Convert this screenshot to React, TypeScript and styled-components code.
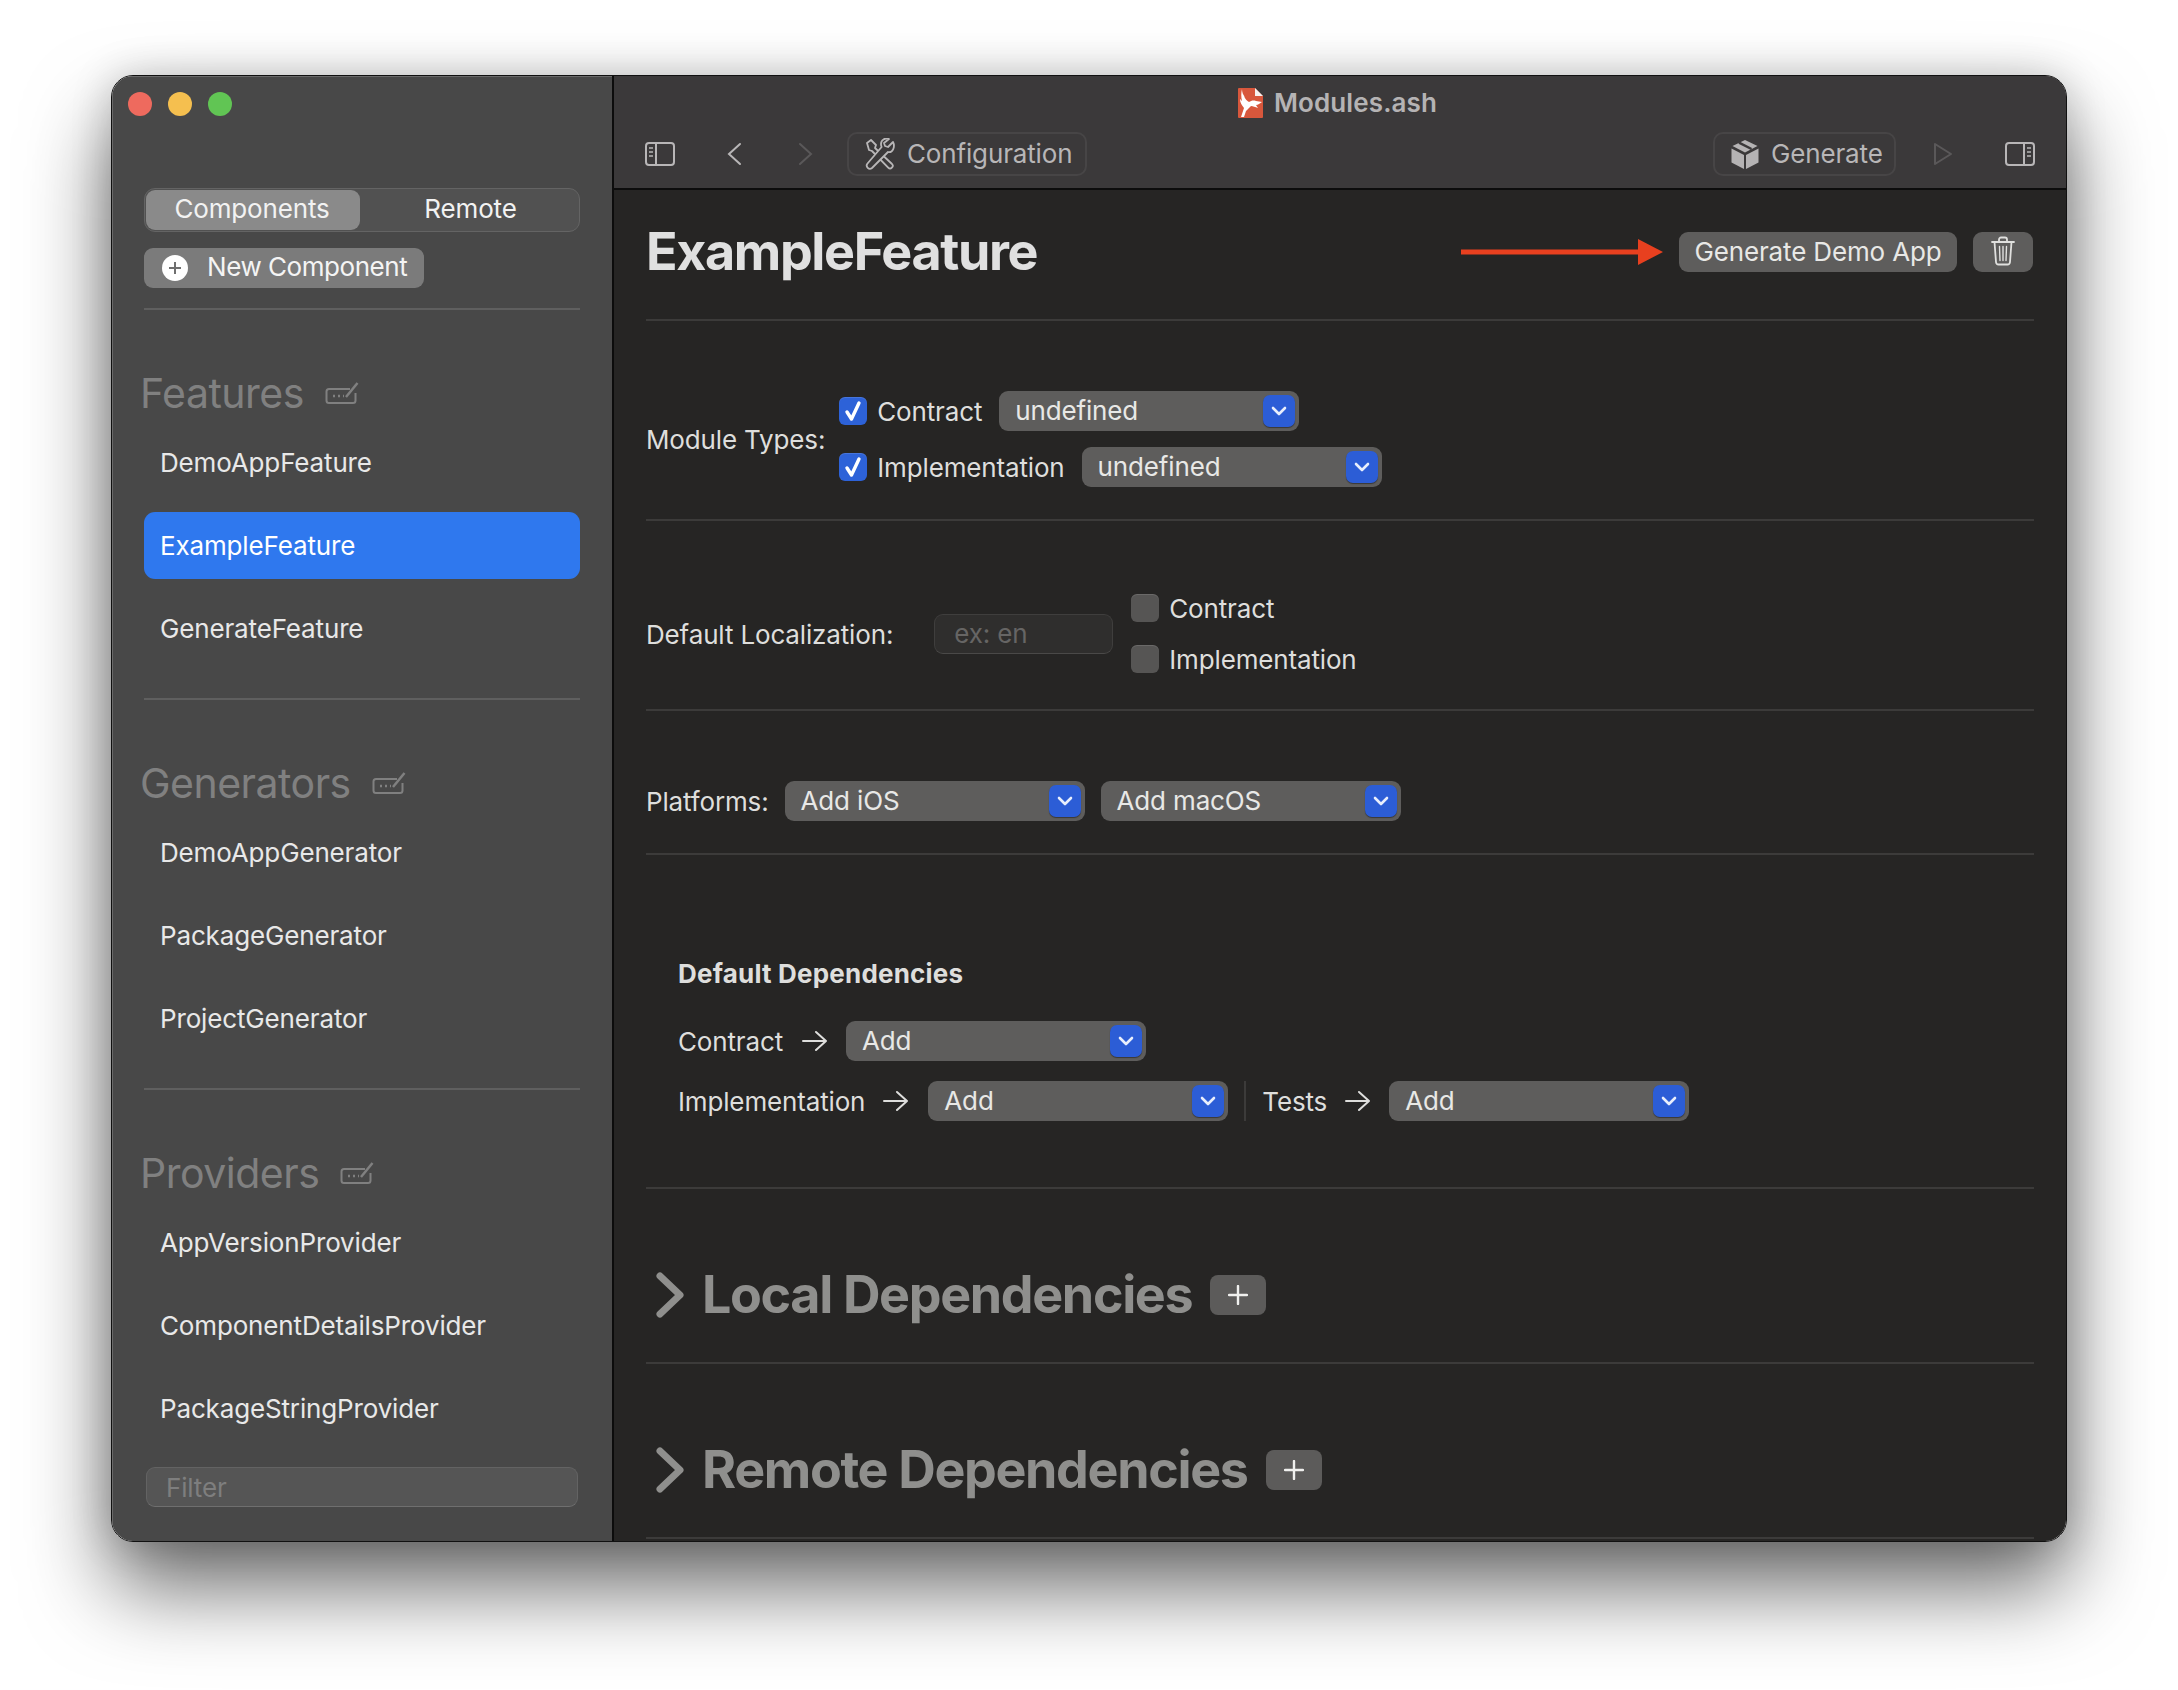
import styled, { createGlobalStyle } from 'styled-components';

const GlobalStyle = createGlobalStyle`
    html, body {
        margin: 0;
        padding: 0;
        background: #fff;
    }
    * {
        box-sizing: border-box;
    }
`;

const Page = styled.div`
    width: 2178px;
    height: 1690px;
    padding: 75px 0 0 111px;
    background: #fff;
    overflow: hidden;
    font-family: Inter, 'Liberation Sans', sans-serif;
    font-size: 26px;
    letter-spacing: -0.15px;
`;

const Window = styled.div`
    width: 1956px;
    height: 1467px;
    display: flex;
    border: 1px solid #111;
    border-radius: 22px;
    overflow: hidden;
    box-shadow: 0 46px 84px rgba(0, 0, 0, 0.58), 0 0 40px rgba(0, 0, 0, 0.18);
`;

// Sidebar

const Sidebar = styled.aside`
    width: 502px;
    flex-shrink: 0;
    display: flex;
    flex-direction: column;
    background: #484848;
    border-right: 2px solid #0c0c0c;
    box-shadow: inset 1px 1px 0 #6a6a6a;
`;

const TrafficLights = styled.div`
    display: flex;
    gap: 16px;
    margin: 16px 0 0 16px;
`;

const Light = styled.span<{ $color: string }>`
    width: 24px;
    height: 24px;
    border-radius: 50%;
    background: ${({ $color }) => $color};
`;

const SidebarBody = styled.div`
    padding: 72px 32px 0;
    display: flex;
    flex-direction: column;
`;

const Segmented = styled.div`
    height: 44px;
    padding: 1px;
    display: flex;
    background: #515151;
    border: 1px solid #646464;
    border-radius: 11px;
`;

const Segment = styled.div<{ $active?: boolean }>`
    width: ${({ $active }) => ($active ? '214px' : 'auto')};
    flex: ${({ $active }) => ($active ? 'none' : '1')};
    padding: 0 ${({ $active }) => ($active ? '2px' : '0')} 4px ${({ $active }) => ($active ? '0' : '3px')};
    display: flex;
    align-items: center;
    justify-content: center;
    border-radius: 9px;
    color: #f2f2f2;
    background: ${({ $active }) => ($active ? '#8a8a8a' : 'transparent')};
`;

const NewButton = styled.div`
    width: 280px;
    height: 40px;
    margin-top: 16px;
    padding: 0 0 3px 18px;
    display: flex;
    align-items: center;
    gap: 19px;
    background: #7b7b7b;
    border-radius: 9px;
    color: #f4f4f4;
    letter-spacing: -0.45px;
`;

const Group = styled.section<{ $last?: boolean }>`
    padding: 58px 0 ${({ $last }) => ($last ? '0' : '36px')};
    border-top: 2px solid #5f5f5f;
`;

const FirstRule = styled.div`
    height: 20px;
`;

const GroupHeading = styled.div`
    height: 50px;
    margin-left: -4px;
    display: flex;
    align-items: center;
    gap: 21px;
    font-size: 41px;
    letter-spacing: -0.5px;
    color: #808080;
`;

const GroupItems = styled.div`
    margin-top: 11px;
    display: flex;
    flex-direction: column;
    gap: 16px;
`;

const GroupItem = styled.div<{ $active?: boolean }>`
    height: 67px;
    padding-left: 16px;
    display: flex;
    align-items: center;
    border-radius: 11px;
    color: ${({ $active }) => ($active ? '#fff' : '#e8e8e8')};
    background: ${({ $active }) => ($active ? '#2f78ee' : 'transparent')};
`;

const Filter = styled.div`
    height: 40px;
    margin: 25px 2px 0;
    padding-left: 19px;
    display: flex;
    align-items: center;
    background: #555;
    border: 1px solid #636363;
    border-bottom-color: #6f6f6f;
    border-radius: 9px;
    color: #7e7e7e;
`;

// Main column

const Main = styled.main`
    flex: 1;
    min-width: 0;
    display: flex;
    flex-direction: column;
    background: #262524;
`;

const Toolbar = styled.header`
    height: 114px;
    flex-shrink: 0;
    background: #3b393a;
    border-bottom: 2px solid #0c0c0c;
`;

const TitleRow = styled.div`
    height: 56px;
    padding: 0 5px 4px 0;
    display: flex;
    align-items: center;
    justify-content: center;
    gap: 11px;
    color: #b5b3b4;
    font-weight: 600;
    letter-spacing: 0.1px;
`;

const ToolRow = styled.div`
    height: 44px;
    padding: 0 31px 0 31px;
    display: flex;
    align-items: center;
`;

const ToolButton = styled.div<{ $left?: string; $width: string }>`
    width: ${({ $width }) => $width};
    height: 44px;
    margin-left: ${({ $left }) => $left || '0'};
    padding: 0 0 2px 16px;
    display: flex;
    align-items: center;
    gap: 12px;
    border: 2px solid #474546;
    border-radius: 10px;
    color: #b8b6b7;
`;

const ToolIcon = styled.svg<{ $left?: string }>`
    flex-shrink: 0;
    margin-left: ${({ $left }) => $left || '0'};
`;

const Content = styled.div`
    padding: 0 32px;
    color: #dededc;
`;

const Section = styled.section<{ $height: number; $top: number }>`
    height: ${({ $height }) => $height}px;
    padding-top: ${({ $top }) => $top}px;
    border-bottom: 2px solid #3c3b3a;
`;

const HeaderRow = styled.div`
    height: 40px;
    padding-right: 1px;
    display: flex;
    align-items: center;
`;

const PageTitle = styled.h1`
    flex: 1;
    margin: 0;
    font-size: 52px;
    line-height: 40px;
    font-weight: 700;
    letter-spacing: -1.35px;
    color: #e0e0e0;
`;

const ActionButton = styled.div<{ $width: string }>`
    width: ${({ $width }) => $width};
    height: 40px;
    padding-bottom: 2px;
    display: flex;
    align-items: center;
    justify-content: center;
    background: #5e5d5c;
    border-radius: 9px;
    color: #e8e8e6;
`;

const TrashButton = styled(ActionButton)`
    margin-left: 16px;
`;

const FormRow = styled.div<{ $gap: string }>`
    display: flex;
    align-items: center;
    gap: ${({ $gap }) => $gap};
`;

const FormLabel = styled.span`
    margin-top: 1px;
`;

const Stack = styled.div<{ $gap: string }>`
    display: flex;
    flex-direction: column;
    gap: ${({ $gap }) => $gap};
`;

const CheckRow = styled.div`
    height: 28px;
    display: flex;
    align-items: center;
    gap: 10px;
`;

const Box = styled.span<{ $checked?: boolean }>`
    width: 28px;
    height: 28px;
    flex-shrink: 0;
    display: flex;
    align-items: center;
    justify-content: center;
    border-radius: 6px;
    background: ${({ $checked }) => ($checked ? '#2d62d8' : '#565554')};
    box-shadow: inset 0 1px 0 rgba(255, 255, 255, 0.12);
`;

const SelectBox = styled.div<{ $width?: number }>`
    width: ${({ $width }) => $width || 300}px;
    height: 40px;
    padding: 0 4px 0 16px;
    display: flex;
    align-items: center;
    justify-content: space-between;
    flex-shrink: 0;
    background: #5e5d5c;
    border-radius: 9px;
    color: #e8e8e6;
`;

const SelectText = styled.span`
    margin-bottom: 2px;
`;

const SelectCaret = styled.span`
    width: 32px;
    height: 32px;
    display: flex;
    align-items: center;
    justify-content: center;
    background: #2c5dd6;
    border-radius: 7px;
    box-shadow: 0 1px 1px rgba(0, 0, 0, 0.4);
`;

const TextField = styled.div`
    width: 179px;
    height: 40px;
    padding-left: 19px;
    display: flex;
    align-items: center;
    background: #2f2e2d;
    border: 1px solid #3f3e3d;
    border-bottom-color: #4a4948;
    border-radius: 9px;
    color: #666564;
`;

const DepsBlock = styled.div`
    padding-left: 32px;
    display: flex;
    flex-direction: column;
`;

const DepsTitle = styled.div`
    height: 32px;
    display: flex;
    align-items: center;
    font-weight: 700;
    letter-spacing: 0.2px;
`;

const DepsRow = styled.div<{ $top: string }>`
    height: 40px;
    margin-top: ${({ $top }) => $top};
    display: flex;
    align-items: center;
`;

const ArrowIcon = styled.svg<{ $left: string; $right: string }>`
    margin: 0 ${({ $right }) => $right} 0 ${({ $left }) => $left};
    flex-shrink: 0;
`;

const VRule = styled.span`
    width: 2px;
    height: 40px;
    margin: 0 16px;
    background: #3c3b3a;
`;

const Disclosure = styled.div`
    height: 46px;
    padding-left: 10px;
    display: flex;
    align-items: center;
    gap: 18px;
`;

const DisclosureTitle = styled.h2`
    margin: 0;
    font-size: 52px;
    line-height: 46px;
    font-weight: 700;
    letter-spacing: -1.35px;
    color: #8f8f8d;
`;

const AddButton = styled.div`
    width: 56px;
    height: 40px;
    display: flex;
    align-items: center;
    justify-content: center;
    background: #5c5b5a;
    border-radius: 8px;
`;

// Drawn icons

const EditIcon = () => (
    <svg width="34" height="24" viewBox="0 0 34 24" fill="none" stroke="#808080" strokeWidth="2">
        <path d="M25 8H4a2.5 2.5 0 0 0-2.5 2.5v9A2.5 2.5 0 0 0 4 22h24a2.5 2.5 0 0 0 2.5-2.5V12" />
        <path d="M21 16L32.5 2" strokeWidth="2.5" />
        <path d="M8 15h2M13 15h2M18 15h1" strokeWidth="2.5" />
    </svg>
);

const PlusCircle = () => (
    <svg width="26" height="26" viewBox="0 0 26 26" style={{ marginTop: '3px' }}>
        <circle cx="13" cy="13" r="13" fill="#fff" />
        <path d="M13 7v12M7 13h12" stroke="#6f6f6f" strokeWidth="2" />
    </svg>
);

const PanelIcon = ({ flip }: { flip?: boolean }) => (
    <ToolIcon
        width="30"
        height="24"
        viewBox="0 0 30 24"
        fill="none"
        stroke="#b8b6b7"
        strokeWidth="2"
        style={flip ? { transform: 'scaleX(-1)' } : undefined}
        $left={flip ? '52px' : '0'}
    >
        <rect x="1" y="1" width="28" height="22" rx="3" />
        <path d="M11 1v22" />
        <path d="M4 6h4M4 10h4M4 14h4" strokeWidth="1.6" />
    </ToolIcon>
);

const NavChevron = ({ back, color, left }: { back?: boolean; color: string; left: string }) => (
    <ToolIcon width="15" height="24" viewBox="0 0 15 24" fill="none" stroke={color} strokeWidth="2" strokeLinecap="round" $left={left}>
        <path d={back ? 'M13 2L2 12l11 10' : 'M2 2l11 10L2 22'} />
    </ToolIcon>
);

const ToolsIcon = () => (
    <svg width="30" height="32" viewBox="0 0 30 32" fill="none" stroke="#b8b6b7" strokeWidth="1.8" strokeLinejoin="round" style={{ flexShrink: 0, marginTop: '2px' }}>
        <path d="M2 5l4-3 5 5-1 3 17 16a2.6 2.6 0 0 1-3.8 3.6L7 13l-3-1z" />
        <path d="M28 4l-5 5-3-1-1-3 5-4c-4-1.5-8 1-8 5 0 1 .2 2 .6 3L2.5 25.5a3.2 3.2 0 0 0 4.5 4.5L23 14c4.5 1.2 7.5-5 5-10z" fill="#3b393a" />
    </svg>
);

const BoxIcon = () => (
    <svg width="28" height="29" viewBox="0 0 28 29" fill="#b5b3b4" style={{ flexShrink: 0, marginTop: '2px' }}>
        <path d="M14 0l12.5 6L14 12.5 1.5 6z" />
        <path d="M8 2.6l12.5 6.4" stroke="#3b393a" strokeWidth="2.5" />
        <path d="M.5 8.4L13 15v14L.5 22.4z" />
        <path d="M27.5 8.4L15 15v14l12.5-6.6z" />
    </svg>
);

const PlayIcon = () => (
    <ToolIcon width="20" height="24" viewBox="0 0 20 24" fill="none" stroke="#5a5859" strokeWidth="2" strokeLinejoin="round" $left="37px">
        <path d="M2 2l16 10L2 22z" />
    </ToolIcon>
);

const DocLogo = () => (
    <svg width="25" height="30" viewBox="0 0 25 30" style={{ flexShrink: 0, marginTop: '2px' }}>
        <path d="M1 0h16l8 8v21a1 1 0 0 1-1 1H1a1 1 0 0 1-1-1V1a1 1 0 0 1 1-1z" fill="#d8573c" />
        <path d="M17 0l8 8h-8z" fill="#f6f2f0" />
        <path d="M4 1c0 3 1 6 3 8l-1-1c1 3 3 5 5 6 2-1 4-2 7-1l6 1c-2 1-4 3-6 3l2 3c-3-1-5-2-7-2l-5 5-2 6h-3l3-9c-2-3-4-5-4-9 1 1 1 1 2 2C3 9 3 5 4 1z" fill="#fff" />
    </svg>
);

const TrashIcon = () => (
    <svg width="24" height="30" viewBox="0 0 24 30" fill="none" stroke="#e0e0de" strokeWidth="1.8" strokeLinecap="round">
        <path d="M1 6h22M8 6V3.500A2 2 0 0 1 10 1.500h4a2 2 0 0 1 2 2V6" />
        <path d="M3.500 6l1.500 20a2.500 2.500 0 0 0 2.500 2.500h9A2.500 2.500 0 0 0 19 26l1.500-20" />
        <path d="M8.500 10.500l.5 14M12 10.500v14M15.500 10.500l-.5 14" strokeWidth="1.400" />
    </svg>
);

const RedArrow = () => (
    <svg width="202" height="26" viewBox="0 0 202 26" style={{ marginRight: '16px' }}>
        <path d="M0 10.500h177V0l25 13-25 13V15.500H0z" fill="#e8401f" />
    </svg>
);

const Check = () => (
    <svg width="18" height="22" viewBox="0 0 18 22" fill="none" stroke="#fff" strokeWidth="3.400" strokeLinecap="round" strokeLinejoin="round">
        <path d="M3 12l4.500 7L15 3" />
    </svg>
);

const CaretDown = () => (
    <svg width="16" height="10" viewBox="0 0 16 10" fill="none" stroke="#e8eefc" strokeWidth="2.600" strokeLinecap="round" strokeLinejoin="round">
        <path d="M2 2l6 6 6-6" />
    </svg>
);

const SmallArrow = ({ left, right }: { left: string; right: string }) => (
    <ArrowIcon width="25" height="22" viewBox="0 0 25 22" fill="none" stroke="#dededc" strokeWidth="2" strokeLinecap="round" strokeLinejoin="round" $left={left} $right={right}>
        <path d="M1 11h23M14 2l10 9-10 9" />
    </ArrowIcon>
);

const BigChevron = () => (
    <svg width="28" height="46" viewBox="0 0 28 46" fill="none" stroke="#8f8f8d" strokeWidth="7" strokeLinecap="round" strokeLinejoin="round" style={{ flexShrink: 0 }}>
        <path d="M4 4l20 19L4 42" />
    </svg>
);

const Plus = () => (
    <svg width="20" height="20" viewBox="0 0 20 20" stroke="#f0f0ee" strokeWidth="2.400" strokeLinecap="round">
        <path d="M10 1v18M1 10h18" />
    </svg>
);

// Small composites

const Select = ({ label, width }: { label: string; width?: number }) => (
    <SelectBox $width={width}>
        <SelectText>{label}</SelectText>
        <SelectCaret>
            <CaretDown />
        </SelectCaret>
    </SelectBox>
);

const CheckItem = ({ label, checked }: { label: string; checked?: boolean }) => (
    <CheckRow>
        <Box $checked={checked}>{checked && <Check />}</Box>
        {label}
    </CheckRow>
);

const SidebarGroup = ({ title, items, active, last }: { title: string; items: string[]; active?: string; last?: boolean }) => (
    <Group $last={last}>
        <GroupHeading>
            {title}
            <EditIcon />
        </GroupHeading>
        <GroupItems>
            {items.map((item) => (
                <GroupItem key={item} $active={item === active}>
                    {item}
                </GroupItem>
            ))}
        </GroupItems>
    </Group>
);

const App = () => (
    <Page>
        <GlobalStyle />
        <Window>
            <Sidebar>
                <TrafficLights>
                    <Light $color="#ee6a5e" />
                    <Light $color="#f5bf4f" />
                    <Light $color="#61c554" />
                </TrafficLights>
                <SidebarBody>
                    <Segmented>
                        <Segment $active>Components</Segment>
                        <Segment>Remote</Segment>
                    </Segmented>
                    <NewButton>
                        <PlusCircle />
                        New Component
                    </NewButton>
                    <FirstRule />
                    <SidebarGroup title="Features" items={['DemoAppFeature', 'ExampleFeature', 'GenerateFeature']} active="ExampleFeature" />
                    <SidebarGroup title="Generators" items={['DemoAppGenerator', 'PackageGenerator', 'ProjectGenerator']} />
                    <SidebarGroup title="Providers" items={['AppVersionProvider', 'ComponentDetailsProvider', 'PackageStringProvider']} last />
                    <Filter>Filter</Filter>
                </SidebarBody>
            </Sidebar>
            <Main>
                <Toolbar>
                    <TitleRow>
                        <DocLogo />
                        Modules.ash
                    </TitleRow>
                    <ToolRow>
                        <PanelIcon />
                        <NavChevron back color="#b8b6b7" left="52px" />
                        <NavChevron color="#5a5859" left="56px" />
                        <ToolButton $left="34px" $width="240px">
                            <ToolsIcon />
                            Configuration
                        </ToolButton>
                        <ToolButton $left="auto" $width="183px">
                            <BoxIcon />
                            Generate
                        </ToolButton>
                        <PlayIcon />
                        <PanelIcon flip />
                    </ToolRow>
                </Toolbar>
                <Content>
                    <Section $height={131} $top={42}>
                        <HeaderRow>
                            <PageTitle>ExampleFeature</PageTitle>
                            <RedArrow />
                            <ActionButton $width="278px">Generate Demo App</ActionButton>
                            <TrashButton $width="60px">
                                <TrashIcon />
                            </TrashButton>
                        </HeaderRow>
                    </Section>
                    <Section $height={200} $top={70}>
                        <FormRow $gap="14px">
                            <FormLabel>Module Types:</FormLabel>
                            <Stack $gap="16px">
                                <FormRow $gap="17px">
                                    <CheckItem label="Contract" checked />
                                    <Select label="undefined" />
                                </FormRow>
                                <FormRow $gap="17px">
                                    <CheckItem label="Implementation" checked />
                                    <Select label="undefined" />
                                </FormRow>
                            </Stack>
                        </FormRow>
                    </Section>
                    <Section $height={190} $top={73}>
                        <FormRow $gap="41px">
                            <FormLabel>Default Localization:</FormLabel>
                            <FormRow $gap="18px">
                                <TextField>ex: en</TextField>
                                <Stack $gap="23px">
                                    <CheckItem label="Contract" />
                                    <CheckItem label="Implementation" />
                                </Stack>
                            </FormRow>
                        </FormRow>
                    </Section>
                    <Section $height={144} $top={70}>
                        <FormRow $gap="16px">
                            <FormLabel>Platforms:</FormLabel>
                            <Select label="Add iOS" />
                            <Select label="Add macOS" />
                        </FormRow>
                    </Section>
                    <Section $height={334} $top={102}>
                        <DepsBlock>
                            <DepsTitle>Default Dependencies</DepsTitle>
                            <DepsRow $top="32px">
                                Contract
                                <SmallArrow left="19px" right="19px" />
                                <Select label="Add" />
                            </DepsRow>
                            <DepsRow $top="20px">
                                Implementation
                                <SmallArrow left="18px" right="20px" />
                                <Select label="Add" />
                                <VRule />
                                Tests
                                <SmallArrow left="18px" right="19px" />
                                <Select label="Add" />
                            </DepsRow>
                        </DepsBlock>
                    </Section>
                    <Section $height={175} $top={83}>
                        <Disclosure>
                            <BigChevron />
                            <DisclosureTitle>Local Dependencies</DisclosureTitle>
                            <AddButton>
                                <Plus />
                            </AddButton>
                        </Disclosure>
                    </Section>
                    <Section $height={175} $top={83}>
                        <Disclosure>
                            <BigChevron />
                            <DisclosureTitle>Remote Dependencies</DisclosureTitle>
                            <AddButton>
                                <Plus />
                            </AddButton>
                        </Disclosure>
                    </Section>
                </Content>
            </Main>
        </Window>
    </Page>
);

export default App;
